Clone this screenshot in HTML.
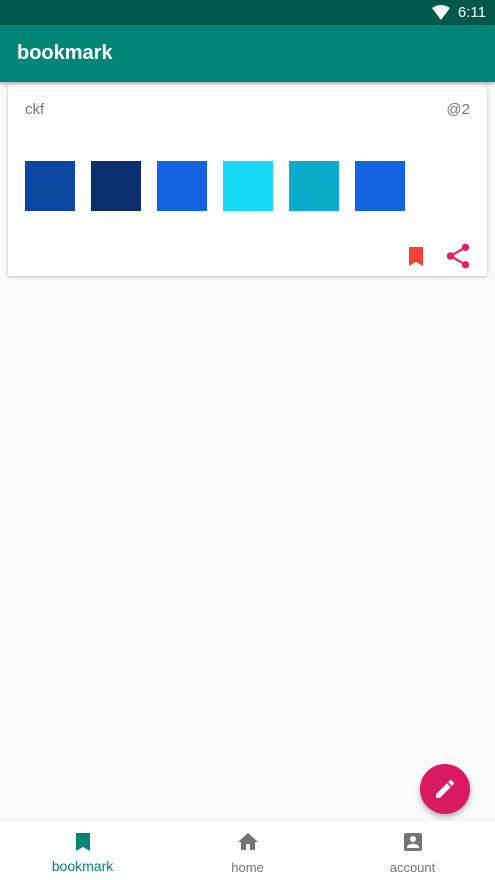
<!DOCTYPE html>
<html><head><meta charset="utf-8"><style>
*{margin:0;padding:0;box-sizing:border-box}
body{width:495px;height:880px;background:#fafafa;font-family:"Liberation Sans",Roboto,sans-serif;position:relative;overflow:hidden}
.sb{position:absolute;left:0;top:0;width:495px;height:25px;background:#00574b}
.sb .t{position:absolute;right:9px;top:4px;color:#fff;font-size:15px}
.tb{position:absolute;left:0;top:25px;width:495px;height:57px;background:#008577;box-shadow:0 2px 4px rgba(0,0,0,.3);z-index:2}
.tb span{position:absolute;left:17px;top:17px;color:#fff;font-size:20px;font-weight:bold}
.card{position:absolute;left:8px;top:84px;width:479px;height:192px;background:#fff;box-shadow:0 1px 3px rgba(0,0,0,.25);border-radius:2px}
.card .a{position:absolute;left:17px;top:17px;color:#757575;font-size:15px}
.card .b{position:absolute;right:17px;top:17px;color:#757575;font-size:15px}
.sq{position:absolute;top:77px;width:50px;height:50px}
.nav{position:absolute;left:0;top:821px;width:495px;height:59px;background:#fff;box-shadow:0 -1px 2px rgba(0,0,0,.06)}
.nav div{position:absolute;top:0;width:165px;text-align:center}
.nav svg{display:block;margin:9px auto 0}
.nav p{font-size:13px;color:#757575;margin-top:6px}
.fab{position:absolute;left:420px;top:764px;width:50px;height:50px;border-radius:50%;background:#d81b60;box-shadow:0 3px 6px rgba(0,0,0,.3)}
</style></head><body>
<div class="sb"><svg style="position:absolute;left:432px;top:5px" width="18" height="15" viewBox="0 0 18 15"><path d="M0 3Q9-3 18 3L9 15Z" fill="#fff"/></svg><span class="t">6:11</span></div>
<div class="tb"><span>bookmark</span></div>
<div class="card">
<span class="a">ckf</span><span class="b">@2</span>
<div class="sq" style="left:17px;background:#0d47a1"></div>
<div class="sq" style="left:83px;background:#0a2e6e"></div>
<div class="sq" style="left:149px;background:#1462e0"></div>
<div class="sq" style="left:215px;background:#18d9f5"></div>
<div class="sq" style="left:281px;background:#09adc8"></div>
<div class="sq" style="left:347px;background:#1462e0"></div>
<svg style="position:absolute;left:400px;top:162px" width="16" height="20" viewBox="0 0 16 20"><path d="M1 1H15V20L8 16L1 20Z" fill="#f44336"/></svg>
<svg style="position:absolute;left:435px;top:157px" width="30" height="30" viewBox="0 0 24 24"><path d="M18 16.08c-.76 0-1.44.3-1.96.77L8.91 12.7c.05-.23.09-.46.09-.7s-.04-.47-.09-.7l7.05-4.11A2.99 2.99 0 1 0 15 5c0 .24.04.47.09.7L8.04 9.81A2.99 2.99 0 1 0 8.04 14.19l7.12 4.16c-.05.21-.08.43-.08.65A2.92 2.92 0 1 0 18 16.08z" fill="#e91e63"/></svg>
</div>
<div class="fab"><svg style="position:absolute;left:13px;top:13px" width="24" height="24" viewBox="0 0 24 24"><path d="M3 17.25V21h3.75L17.81 9.94l-3.75-3.75L3 17.25zM20.71 7.04a1 1 0 0 0 0-1.41l-2.34-2.34a1 1 0 0 0-1.41 0l-1.83 1.83 3.75 3.75 1.83-1.83z" fill="#fff"/></svg></div>
<div class="nav">
<div style="left:0"><svg width="24" height="24" viewBox="0 0 24 24"><path d="M5 3H19V21L12 17L5 21Z" fill="#008577"/></svg><p style="color:#008577;font-size:14px;margin-top:4px">bookmark</p></div>
<div style="left:165px"><svg width="24" height="24" viewBox="0 0 24 24"><path d="M10 20v-6h4v6h5v-8h3L12 3 2 12h3v8z" fill="#757575"/></svg><p>home</p></div>
<div style="left:330px"><svg width="24" height="24" viewBox="0 0 24 24"><path d="M3 5v14a2 2 0 0 0 2 2h14a2 2 0 0 0 2-2V5a2 2 0 0 0-2-2H5a2 2 0 0 0-2 2zm12 4a3 3 0 1 1-6 0 3 3 0 0 1 6 0zm-9 8c0-2 4-3.1 6-3.1s6 1.1 6 3.1v1H6v-1z" fill="#757575"/></svg><p>account</p></div>
</div>
</body></html>
